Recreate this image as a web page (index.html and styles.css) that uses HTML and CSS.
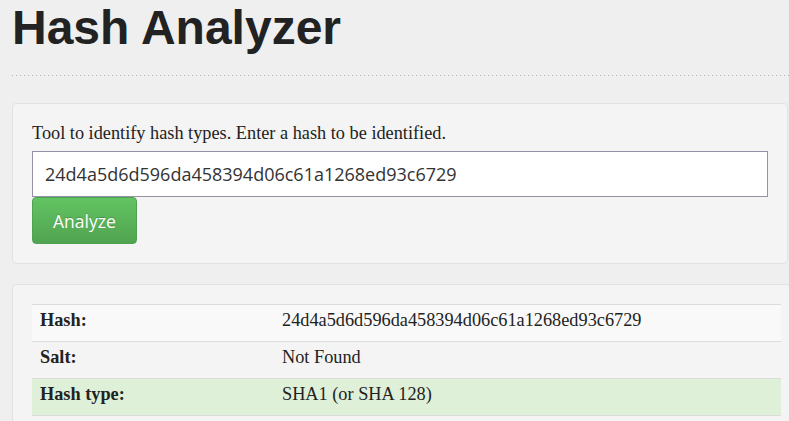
FILE: index.html
```html
<!DOCTYPE html>
<html lang="en">
<head>
<meta charset="utf-8">
<title>Hash Analyzer</title>
<link rel="stylesheet" href="styles.css">
</head>
<body>
<div class="page">
  <h1 class="title">Hash Analyzer</h1>
  <div class="rule"></div>
  <form class="panel panel-form">
    <label class="lead" for="hash">Tool to identify hash types. Enter a hash to be identified.</label>
    <input class="hash-input" id="hash" type="text" value="24d4a5d6d596da458394d06c61a1268ed93c6729">
    <button class="btn-success" type="button">Analyze</button>
  </form>
  <div class="panel panel-result">
    <table class="result">
      <tr class="striped">
        <th>Hash:</th>
        <td>24d4a5d6d596da458394d06c61a1268ed93c6729</td>
      </tr>
      <tr>
        <th>Salt:</th>
        <td>Not Found</td>
      </tr>
      <tr class="success">
        <th>Hash type:</th>
        <td>SHA1 (or SHA 128)</td>
      </tr>
    </table>
  </div>
</div>
</body>
</html>
```

FILE: styles.css
```css
html, body {
  margin: 0;
  padding: 0;
}
body {
  background: #efefef;
  overflow: hidden;
  font-family: "Liberation Serif", "Times New Roman", serif;
  color: #222;
}
.page {
  padding: 4px 0 0 12px;
}
.title {
  margin: 0;
  font-family: "Liberation Sans", Arial, sans-serif;
  font-weight: bold;
  font-size: 48px;
  line-height: 48px;
  color: #222;
}
.rule {
  height: 1px;
  margin-top: 23px;
  background: linear-gradient(to right, #b4b4b4 1px, transparent 1px) 0 0 / 4px 1px repeat-x;
}
.panel {
  box-sizing: border-box;
  background: #f4f4f4;
  border: 1px solid #e2e2e2;
  border-radius: 4px;
  padding: 19px;
}
.panel-form {
  display: flex;
  flex-direction: column;
  align-items: flex-start;
  width: 776px;
  margin: 27px 0 0 0;
}
.panel-result {
  width: 789px;
  margin-top: 20px;
  height: 200px;
}
.lead {
  font-size: 18.3px;
  line-height: 20px;
  margin-bottom: 8px;
  color: #222;
}
.hash-input {
  box-sizing: border-box;
  width: 100%;
  height: 46px;
  margin: 0;
  padding: 0 12px;
  border: 1px solid #9592a8;
  border-radius: 0;
  background: #fff;
  font-family: "Open Sans", sans-serif;
  font-size: 18px;
  color: #333;
  outline: none;
}
.btn-success {
  box-sizing: border-box;
  height: 47px;
  margin: 0;
  padding: 0 20px;
  border: 1px solid #4fa34f;
  border-radius: 4px;
  background: linear-gradient(#62c462, #51a351);
  color: #fff;
  font-family: "Open Sans", sans-serif;
  font-size: 17.5px;
  text-shadow: 0 -1px 0 rgba(0, 0, 0, 0.2);
  cursor: pointer;
}
.result {
  width: 100%;
  border-collapse: collapse;
  font-size: 18.3px;
  line-height: 20px;
}
.result th,
.result td {
  text-align: left;
  vertical-align: top;
  padding: 5px 8px 11px;
  border-top: 1px solid #dcdcdc;
  border-bottom: 1px solid #dcdcdc;
}
.result th {
  width: 226px;
  font-weight: bold;
}
.result .striped {
  background: #f9f9f9;
}
.result .success {
  background: #dff0d8;
}
```
